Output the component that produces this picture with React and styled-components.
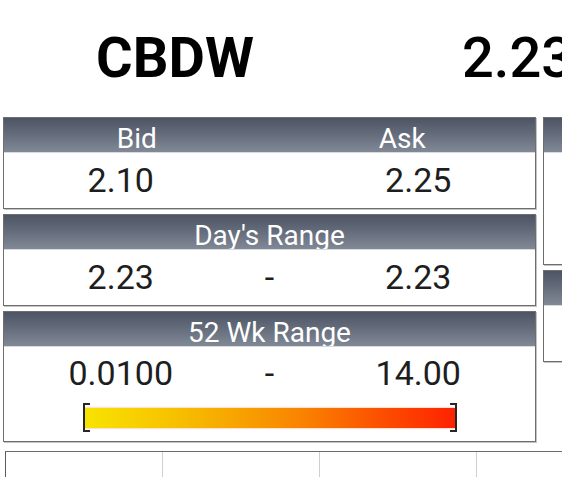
import React from 'react'
import styled, { createGlobalStyle } from 'styled-components'

const GlobalStyle = createGlobalStyle`
  html, body {
    margin: 0;
    padding: 0;
    background: #ffffff;
    overflow: hidden;
  }
  body {
    font-family: Roboto, "Liberation Sans", sans-serif;
  }
`

const Page = styled.div`
  width: 1100px;
`

const Top = styled.div`
  display: flex;
  align-items: flex-start;
  height: 117px;
`

const Symbol = styled.div`
  width: 350px;
  text-align: center;
  font-size: 56px;
  font-weight: 700;
  line-height: 66px;
  padding-top: 25px;
  color: #000;
`

const Price = styled.div`
  margin-left: 112px;
  font-size: 56px;
  font-weight: 500;
  line-height: 66px;
  padding-top: 25px;
  color: #000;
`

const Main = styled.div`
  display: flex;
  align-items: flex-start;
  gap: 7px;
  padding-left: 3px;
`

const Column = styled.div`
  display: flex;
  flex-direction: column;
  gap: 5px;
  width: ${p => p.$width}px;
  flex-shrink: 0;
`

const Panel = styled.div`
  box-sizing: border-box;
  border: 1px solid #6e6e6e;
  box-shadow: 1px 1px 0 #c4c4c4;
  background: #fff;
  height: ${p => (p.$height ? `${p.$height}px` : 'auto')};
`

const PanelHead = styled.div`
  height: 34px;
  overflow: hidden;
  background: linear-gradient(to bottom, #4d5464 0%, #636a79 45%, #818896 100%);
  border-bottom: 1px solid #d7dadf;
  display: grid;
  grid-template-columns: ${p => (p.$split ? '1fr 1fr' : '1fr')};
`

const HeadTitle = styled.div`
  text-align: center;
  color: #fff;
  font-size: 28px;
  line-height: 41px;
  white-space: nowrap;
`

const PanelBody = styled.div`
  height: ${p => p.$height}px;
`

const ValueRow = styled.div`
  display: grid;
  grid-template-columns: 1fr 64px 1fr;
  font-size: 34px;
  line-height: ${p => p.$lh || 55}px;
  color: #1e1e1e;
`

const Value = styled.div`
  text-align: center;
`

const BarWrap = styled.div`
  display: flex;
  justify-content: center;
  padding-top: 4px;
`

const BarTrack = styled.div`
  position: relative;
  width: 374px;
  height: 29px;
  padding: 0 2px;
  box-sizing: border-box;
  display: flex;
  align-items: center;
`

const BarFill = styled.div`
  flex: 1;
  height: 20px;
  background: linear-gradient(to right, #f8e300 0%, #f7c400 22%, #f7a200 42%, #f98000 60%, #fc4f00 80%, #ff2200 100%);
  box-shadow: 0 0 1px 1px rgba(250, 170, 120, 0.35);
`

const Bracket = styled.div`
  position: absolute;
  top: 0;
  bottom: 0;
  width: 5px;
  border: 2px solid #262626;
  ${p => (p.$side === 'left' ? 'left: 0; border-right: none;' : 'right: 0; border-left: none;')}
`

const BottomRow = styled.div`
  display: flex;
  margin: 9px 0 0 5px;
  border-top: 1px solid #6a6a6a;
`

const Cell = styled.div`
  box-sizing: border-box;
  width: 157px;
  height: 40px;
  flex-shrink: 0;
  border-left: 1px solid ${p => (p.$first ? '#5a5a5a' : '#cfcfcf')};
`

export default function App() {
  return (
    <>
      <GlobalStyle />
      <Page>
        <Top>
          <Symbol>CBDW</Symbol>
          <Price>2.23</Price>
        </Top>
        <Main>
          <Column $width={533}>
            <Panel>
              <PanelHead $split>
                <HeadTitle>Bid</HeadTitle>
                <HeadTitle>Ask</HeadTitle>
              </PanelHead>
              <PanelBody $height={55}>
                <ValueRow>
                  <Value>2.10</Value>
                  <Value></Value>
                  <Value>2.25</Value>
                </ValueRow>
              </PanelBody>
            </Panel>
            <Panel>
              <PanelHead>
                <HeadTitle>Day's Range</HeadTitle>
              </PanelHead>
              <PanelBody $height={55}>
                <ValueRow>
                  <Value>2.23</Value>
                  <Value>-</Value>
                  <Value>2.23</Value>
                </ValueRow>
              </PanelBody>
            </Panel>
            <Panel>
              <PanelHead>
                <HeadTitle>52 Wk Range</HeadTitle>
              </PanelHead>
              <PanelBody $height={94}>
                <ValueRow $lh={52}>
                  <Value>0.0100</Value>
                  <Value>-</Value>
                  <Value>14.00</Value>
                </ValueRow>
                <BarWrap>
                  <BarTrack>
                    <Bracket $side="left" />
                    <BarFill />
                    <Bracket $side="right" />
                  </BarTrack>
                </BarWrap>
              </PanelBody>
            </Panel>
          </Column>
          <Column $width={300}>
            <Panel $height={148}>
              <PanelHead />
            </Panel>
            <Panel $height={92}>
              <PanelHead />
            </Panel>
          </Column>
        </Main>
        <BottomRow>
          <Cell $first />
          <Cell />
          <Cell />
          <Cell />
        </BottomRow>
      </Page>
    </>
  )
}
